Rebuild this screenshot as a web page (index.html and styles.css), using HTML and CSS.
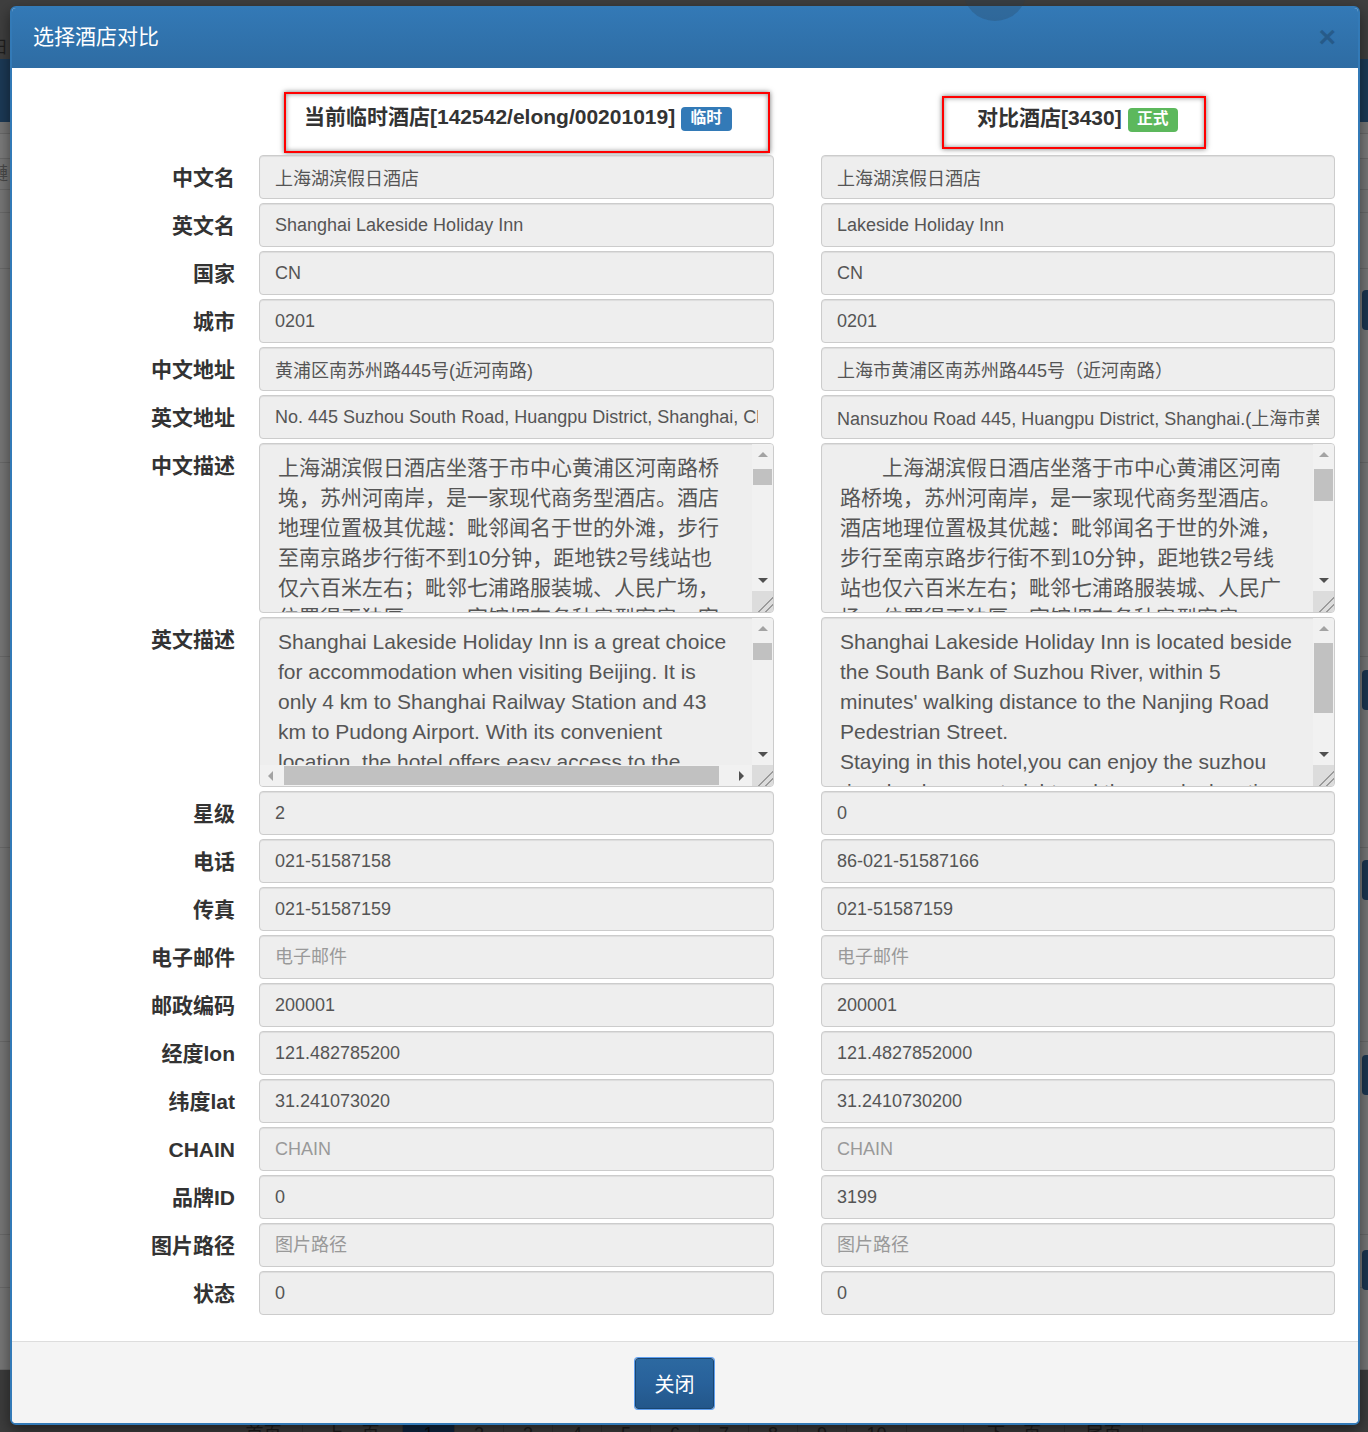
FILE: index.html
```html
<!DOCTYPE html>
<html lang="zh-CN">
<head>
<meta charset="utf-8">
<title>选择酒店对比</title>
<link rel="stylesheet" href="styles.css">
</head>
<body>
<div class="page">
  <div class="pg-top"><span class="pg-ch">日</span></div>
  <div class="pg-nav"></div>
  <div class="pg-row h12"></div>
  <div class="pg-row h25"></div>
  <div class="pg-row h31"><span class="pg-ch2">鏈</span></div>
  <div class="pg-row h23"></div>
  <div class="pg-row h56"></div>
  <div class="pg-row h194"><span class="pg-btn mt21"></span></div>
  <div class="pg-row h194"></div>
  <div class="pg-row h191"><span class="pg-btn mt13"></span></div>
  <div class="pg-row h194"><span class="pg-btn mt12"></span></div>
  <div class="pg-row h193"><span class="pg-btn mt13"></span></div>
  <div class="pg-row h53"><span class="pg-btn mt15"></span></div>
  <div class="pg-row h82"></div>
  <div class="pg-pager">
    <span class="pg-cell w78">首页</span>
    <span class="pg-cell w100">上一页</span>
    <span class="pg-cell w52 cur">1</span>
    <span class="pg-cell w49">2</span>
    <span class="pg-cell w49">3</span>
    <span class="pg-cell w49">4</span>
    <span class="pg-cell w49">5</span>
    <span class="pg-cell w49">6</span>
    <span class="pg-cell w49">7</span>
    <span class="pg-cell w49">8</span>
    <span class="pg-cell w49">9</span>
    <span class="pg-cell w60">10</span>
    <span class="pg-cell w57"></span>
    <span class="pg-cell w101">下一页</span>
    <span class="pg-cell w78">尾页</span>
  </div>
</div>

<div class="modal">
  <div class="m-head">
    <h4 class="m-title">选择酒店对比</h4>
    <span class="m-close">×</span>
  </div>
  <div class="m-body">
    <div class="cmp-head">
      <div class="hbox hbox-l">当前临时酒店[142542/elong/00201019] <span class="badge b-blue">临时</span></div>
      <div class="hbox hbox-r">对比酒店[3430] <span class="badge b-green">正式</span></div>
    </div>
    <div class="form">
      <label class="lbl">中文名</label>
      <input class="fc" readonly value="上海湖滨假日酒店">
      <input class="fc r" readonly value="上海湖滨假日酒店">

      <label class="lbl">英文名</label>
      <input class="fc" readonly value="Shanghai Lakeside Holiday Inn">
      <input class="fc r" readonly value="Lakeside Holiday Inn">

      <label class="lbl">国家</label>
      <input class="fc" readonly value="CN">
      <input class="fc r" readonly value="CN">

      <label class="lbl">城市</label>
      <input class="fc" readonly value="0201">
      <input class="fc r" readonly value="0201">

      <label class="lbl">中文地址</label>
      <input class="fc" readonly value="黄浦区南苏州路445号(近河南路)">
      <input class="fc r" readonly value="上海市黄浦区南苏州路445号（近河南路）">

      <label class="lbl">英文地址</label>
      <input class="fc" readonly value="No. 445 Suzhou South Road, Huangpu District, Shanghai, China">
      <input class="fc r" readonly value="Nansuzhou Road 445, Huangpu District, Shanghai.(上海市黄浦区南苏州路445号)">

      <label class="lbl">中文描述</label>
      <div class="ta">
        <div class="ta-text">上海湖滨假日酒店坐落于市中心黄浦区河南路桥
堍，苏州河南岸，是一家现代商务型酒店。酒店
地理位置极其优越：毗邻闻名于世的外滩，步行
至南京路步行街不到10分钟，距地铁2号线站也
仅六百米左右；毗邻七浦路服装城、人民广场，
位置得天独厚。……宾馆拥有各种房型客房，客</div>
        <div class="vbar">
          <div class="sb-btn"><i class="tri-up"></i></div>
          <div class="track"><div class="thumb th16"></div></div>
          <div class="sb-btn"><i class="tri-down"></i></div>
        </div>
        <div class="corner"></div>
      </div>
      <div class="ta r">
        <div class="ta-text">　　上海湖滨假日酒店坐落于市中心黄浦区河南
路桥堍，苏州河南岸，是一家现代商务型酒店。
酒店地理位置极其优越：毗邻闻名于世的外滩，
步行至南京路步行街不到10分钟，距地铁2号线
站也仅六百米左右；毗邻七浦路服装城、人民广
场，位置得天独厚。宾馆拥有各种房型客房。</div>
        <div class="vbar">
          <div class="sb-btn"><i class="tri-up"></i></div>
          <div class="track"><div class="thumb th32"></div></div>
          <div class="sb-btn"><i class="tri-down"></i></div>
        </div>
        <div class="corner"></div>
      </div>

      <label class="lbl">英文描述</label>
      <div class="ta hs">
        <div class="ta-text">Shanghai Lakeside Holiday Inn is a great choice
for accommodation when visiting Beijing. It is
only 4 km to Shanghai Railway Station and 43
km to Pudong Airport. With its convenient
location, the hotel offers easy access to the</div>
        <div class="vbar">
          <div class="sb-btn"><i class="tri-up"></i></div>
          <div class="track"><div class="thumb th17"></div></div>
          <div class="sb-btn"><i class="tri-down"></i></div>
        </div>
        <div class="hbar">
          <div class="sb-btn"><i class="tri-left"></i></div>
          <div class="htrack"><div class="hthumb"></div></div>
          <div class="sb-btn"><i class="tri-right"></i></div>
        </div>
        <div class="corner"></div>
      </div>
      <div class="ta r">
        <div class="ta-text">Shanghai Lakeside Holiday Inn is located beside
the South Bank of Suzhou River, within 5
minutes' walking distance to the Nanjing Road
Pedestrian Street.
Staying in this hotel,you can enjoy the suzhou
river landscape at night and the nearby location</div>
        <div class="vbar">
          <div class="sb-btn"><i class="tri-up"></i></div>
          <div class="track"><div class="thumb th70"></div></div>
          <div class="sb-btn"><i class="tri-down"></i></div>
        </div>
        <div class="corner"></div>
      </div>

      <label class="lbl">星级</label>
      <input class="fc" readonly value="2">
      <input class="fc r" readonly value="0">

      <label class="lbl">电话</label>
      <input class="fc" readonly value="021-51587158">
      <input class="fc r" readonly value="86-021-51587166">

      <label class="lbl">传真</label>
      <input class="fc" readonly value="021-51587159">
      <input class="fc r" readonly value="021-51587159">

      <label class="lbl">电子邮件</label>
      <input class="fc" readonly placeholder="电子邮件">
      <input class="fc r" readonly placeholder="电子邮件">

      <label class="lbl">邮政编码</label>
      <input class="fc" readonly value="200001">
      <input class="fc r" readonly value="200001">

      <label class="lbl">经度lon</label>
      <input class="fc" readonly value="121.482785200">
      <input class="fc r" readonly value="121.4827852000">

      <label class="lbl">纬度lat</label>
      <input class="fc" readonly value="31.241073020">
      <input class="fc r" readonly value="31.2410730200">

      <label class="lbl">CHAIN</label>
      <input class="fc" readonly placeholder="CHAIN">
      <input class="fc r" readonly placeholder="CHAIN">

      <label class="lbl">品牌ID</label>
      <input class="fc" readonly value="0">
      <input class="fc r" readonly value="3199">

      <label class="lbl">图片路径</label>
      <input class="fc" readonly placeholder="图片路径">
      <input class="fc r" readonly placeholder="图片路径">

      <label class="lbl">状态</label>
      <input class="fc" readonly value="0">
      <input class="fc r" readonly value="0">
    </div>
  </div>
  <div class="m-foot">
    <button class="btn-close" type="button">关闭</button>
  </div>
</div>
<div class="blob"></div>
</body>
</html>
```
FILE: styles.css
```css
* { box-sizing: border-box; }

body {
  margin: 0;
  width: 1368px;
  height: 1432px;
  overflow: hidden;
  position: relative;
  background: #787878;
  font-family: "Liberation Sans", "Noto Sans CJK SC", sans-serif;
}

/* dimmed page behind the dialog */
.pg-top {
  height: 59px;
  background: #3f3f3f;
  padding-top: 38px;
}
.pg-ch {
  display: inline-block;
  margin-left: -9px;
  font-size: 17px;
  line-height: 20px;
  color: #1f1f1f;
}
.pg-nav { height: 63px; background: #1c3a57; }
.pg-row {
  border-bottom: 1px solid #6a6a6a;
  display: flex;
  justify-content: space-between;
  align-items: flex-start;
}
.pg-ch2 {
  display: inline-block;
  margin: 4px 0 0 -10px;
  font-size: 18px;
  line-height: 22px;
  color: #4a4a4a;
}
.h12 { height: 12px; }
.h25 { height: 25px; background: #7c7c7c; }
.h31 { height: 31px; }
.h23 { height: 23px; }
.h56 { height: 56px; }
.h194 { height: 194px; }
.h191 { height: 191px; }
.h193 { height: 193px; }
.h53 { height: 53px; }
.h82 { height: 82px; }
.pg-btn {
  margin-left: auto;
  width: 30px;
  height: 40px;
  margin-right: -24px;
  background: #1d3752;
  border-radius: 4px;
}
.mt21 { margin-top: 21px; }
.mt13 { margin-top: 13px; }
.mt12 { margin-top: 12px; }
.mt15 { margin-top: 15px; }

.pg-pager {
  height: 62px;
  background: #3d3d3d;
  padding: 50px 0 0 225px;
  display: flex;
}
.pg-cell {
  flex: none;
  height: 36px;
  border: 1px solid #333;
  border-left: none;
  color: #1c1c1c;
  font-size: 18px;
  line-height: 22px;
  padding-top: 2px;
  text-align: center;
}
.pg-cell.cur { background: #0f2741; color: #0a0a0a; }
.w78 { width: 78px; }
.w100 { width: 100px; }
.w52 { width: 52px; }
.w49 { width: 49px; }
.w60 { width: 60px; }
.w57 { width: 57px; }
.w101 { width: 101px; }

/* dialog */
.modal {
  position: absolute;
  top: 6px;
  left: 10px;
  width: 1350px;
  border: 2px solid #337ab7;
  border-radius: 6px;
  background: #fff;
  box-shadow: 0 5px 15px rgba(0, 0, 0, .5);
  overflow: hidden;
}
.m-head {
  height: 60px;
  background: linear-gradient(#3379b6, #2e6ca3);
  display: flex;
  align-items: center;
  justify-content: space-between;
  padding: 0 22px 0 21px;
}
.m-title {
  margin: -3px 0 0;
  color: #fff;
  font-size: 21px;
  font-weight: normal;
  line-height: 1;
}
.m-close {
  margin-top: -2px;
  font-size: 30px;
  font-weight: bold;
  line-height: 1;
  color: #000;
  opacity: .2;
}

.m-body { padding: 24px 23px 26px 0; }

.cmp-head {
  display: grid;
  grid-template-columns: 223px 515px 537px;
  column-gap: 24px;
  align-items: center;
  height: 61px;
  margin-bottom: 2px;
}
.hbox {
  justify-self: start;
  border: 2px solid #ff0000;
  box-shadow: 0 0 5px rgba(0, 0, 0, .55), inset 0 0 5px rgba(0, 0, 0, .45);
  font-size: 21px;
  font-weight: bold;
  color: #333;
  line-height: 24px;
  white-space: nowrap;
  overflow: hidden;
}
.hbox-l {
  grid-column: 2;
  height: 61px;
  margin-left: 25px;
  padding: 11px 36px 0 18px;
}
.hbox-r {
  grid-column: 3;
  height: 53px;
  margin-left: 144px;
  padding: 8px 26px 0 33px;
}
.badge {
  display: inline-block;
  font-size: 15.75px;
  line-height: 16px;
  padding: 3px 9.5px 5px;
  border-radius: 4px;
  color: #fff;
  font-weight: bold;
  vertical-align: top;
  margin-top: 2px;
}
.b-blue { background: #337ab7; }
.b-green { background: #5cb85c; }

.form {
  display: grid;
  grid-template-columns: 223px 515px 537px;
  column-gap: 24px;
  row-gap: 4px;
}
.lbl {
  align-self: start;
  height: 44px;
  text-align: right;
  font-size: 21px;
  font-weight: bold;
  color: #333;
  line-height: 42px;
  padding-top: 2px;
  white-space: nowrap;
}
.fc {
  display: block;
  width: 100%;
  height: 44px;
  margin: 0;
  padding: 0 15px;
  border: 1px solid #ccc;
  border-radius: 4px;
  background: #eee;
  box-shadow: inset 0 1px 1px rgba(0, 0, 0, .075);
  font-family: "Liberation Sans", "Noto Sans CJK SC", sans-serif;
  font-size: 18px;
  color: #555;
  outline: none;
}
.fc::placeholder { color: #999; opacity: 1; }
.fc.r { margin-left: 23px; width: calc(100% - 23px); }

/* read-only text boxes with classic scrollbars */
.ta {
  height: 170px;
  border: 1px solid #ccc;
  border-radius: 4px;
  background: #eee;
  box-shadow: inset 0 1px 1px rgba(0, 0, 0, .075);
  display: grid;
  grid-template-columns: 1fr 21px;
  grid-template-rows: 1fr 21px;
  overflow: hidden;
}
.ta.r { margin-left: 23px; }
.ta-text {
  grid-row: 1 / 3;
  grid-column: 1;
  padding: 9px 0 0 18px;
  font-size: 21px;
  line-height: 30px;
  color: #555;
  white-space: pre;
  overflow: hidden;
}
.ta.hs .ta-text { grid-row: 1; }
.vbar {
  grid-row: 1;
  grid-column: 2;
  display: flex;
  flex-direction: column;
  background: #f1f1f1;
}
.sb-btn {
  flex: none;
  height: 21px;
  display: flex;
  align-items: center;
  justify-content: center;
}
.track { flex: 1; }
.thumb { margin: 4px 1px 0; background: #c1c1c1; }
.th16 { height: 16px; }
.th17 { height: 17px; }
.th32 { height: 32px; }
.th70 { height: 70px; }
.hbar {
  grid-row: 2;
  grid-column: 1;
  display: flex;
  background: #f1f1f1;
}
.hbar .sb-btn { width: 21px; height: auto; }
.htrack { flex: 1; display: flex; padding: 1px 0; }
.hthumb { width: 435px; margin-left: 3px; background: #c1c1c1; }
.corner {
  grid-row: 2;
  grid-column: 2;
  background:
    linear-gradient(135deg, transparent 62%, #9a9a9a 62%, #9a9a9a 67%, transparent 67%, transparent 79%, #9a9a9a 79%, #9a9a9a 84%, transparent 84%),
    #dcdcdc;
}
.tri-up, .tri-down, .tri-left, .tri-right { display: block; width: 0; height: 0; }
.tri-up { border-left: 5px solid transparent; border-right: 5px solid transparent; border-bottom: 5px solid #a3a3a3; }
.tri-down { border-left: 5px solid transparent; border-right: 5px solid transparent; border-top: 5px solid #505050; }
.tri-left { border-top: 5px solid transparent; border-bottom: 5px solid transparent; border-right: 5px solid #a3a3a3; }
.tri-right { border-top: 5px solid transparent; border-bottom: 5px solid transparent; border-left: 5px solid #505050; }

.m-foot {
  border-top: 1px solid #dddddd;
  background: #f4f4f4;
  padding: 15px 21px 13px 0;
  text-align: center;
}
.btn-close {
  display: inline-block;
  width: 79px;
  height: 51px;
  margin: 1px;
  padding: 0;
  border: 1px solid #1a4670;
  border-radius: 3px;
  box-shadow: 0 0 0 1px #5f9ff0;
  background: linear-gradient(#2c69a1, #28619a 50%, #23578a);
  color: #fff;
  font-family: "Noto Sans CJK SC", sans-serif;
  font-size: 20px;
  line-height: 49px;
  vertical-align: top;
}

.blob {
  position: absolute;
  left: 963px;
  top: -43px;
  width: 64px;
  height: 64px;
  border-radius: 50%;
  background: rgba(40, 60, 80, .25);
}
```
